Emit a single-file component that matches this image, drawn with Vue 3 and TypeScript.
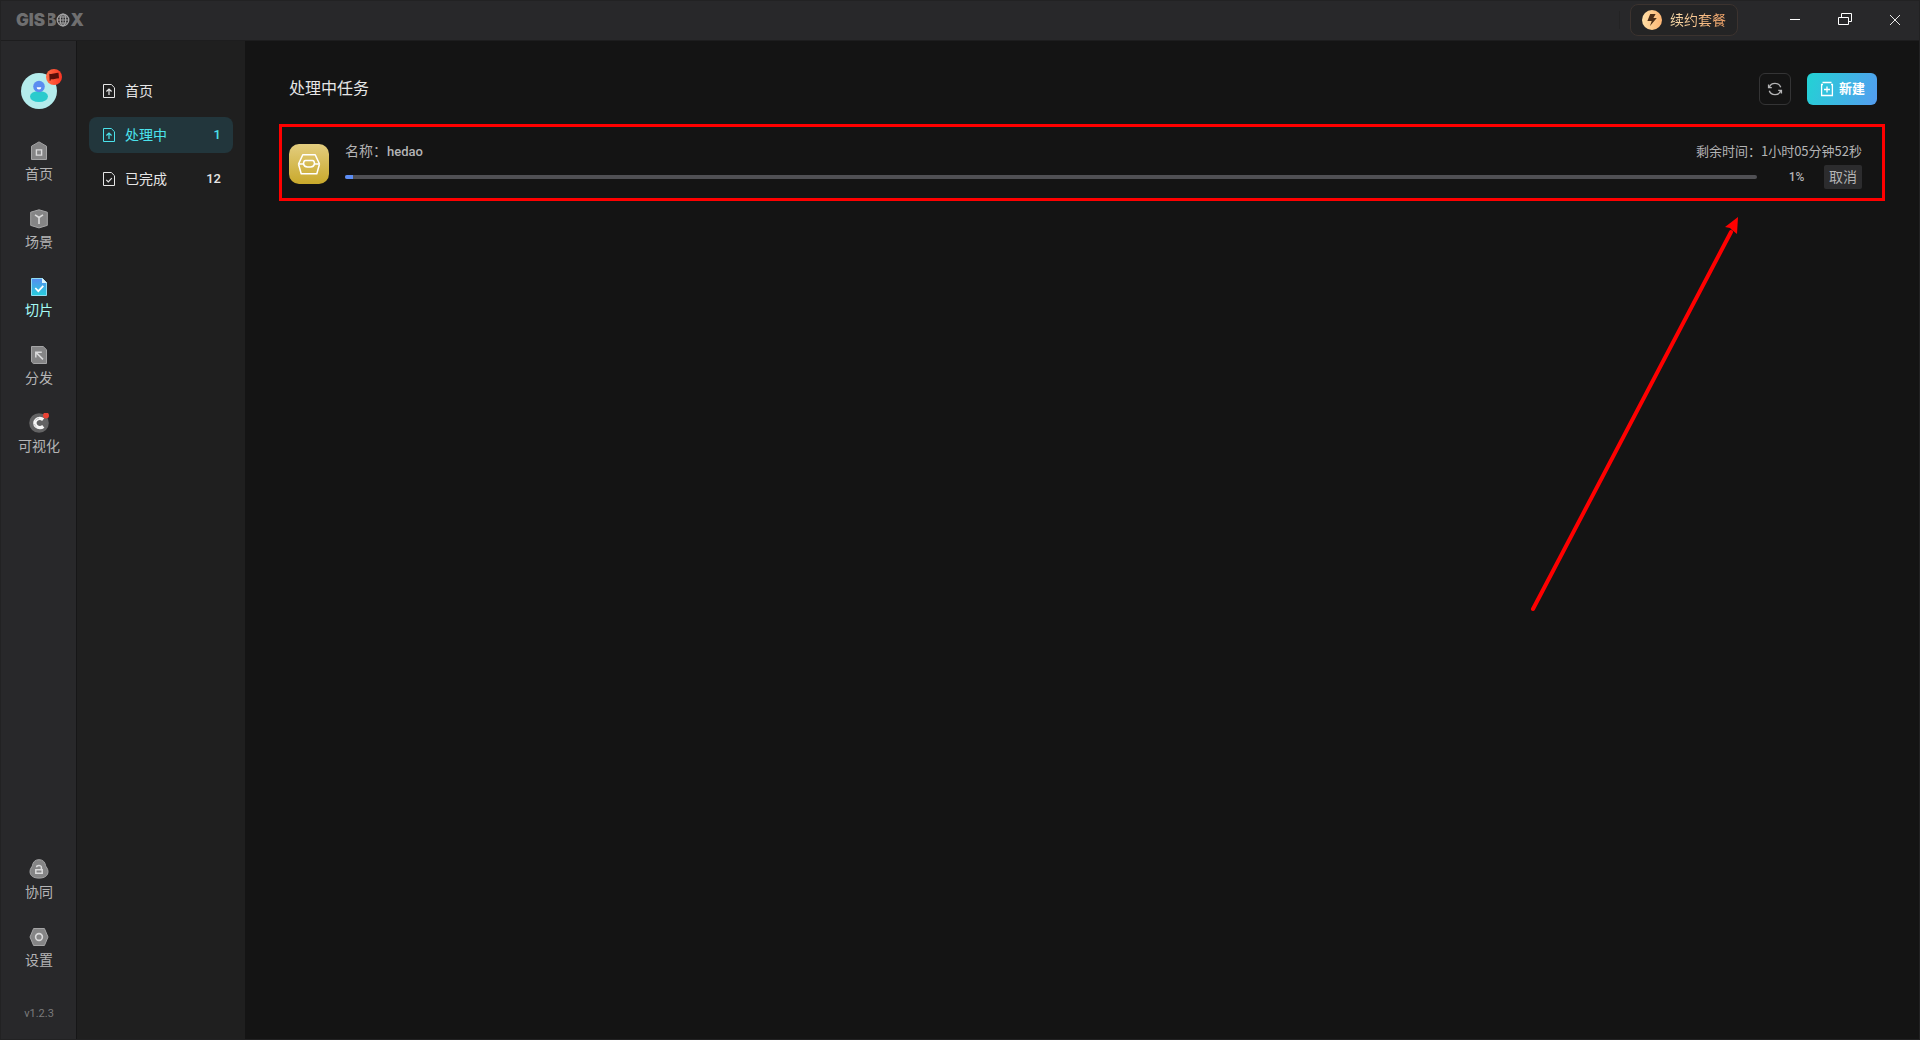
<script setup lang="ts">
import { ref } from 'vue'

interface RailItem {
  id: string
  label: string
}

interface MenuItem {
  id: string
  label: string
  count: number | null
}

interface Task {
  name: string
  remaining: string
  percent: number
}

const railTop: RailItem[] = [
  { id: 'home', label: '首页' },
  { id: 'scene', label: '场景' },
  { id: 'tile', label: '切片' },
  { id: 'publish', label: '分发' },
  { id: 'visual', label: '可视化' },
]

const railBottom: RailItem[] = [
  { id: 'team', label: '协同' },
  { id: 'settings', label: '设置' },
]

const menu: MenuItem[] = [
  { id: 'index', label: '首页', count: null },
  { id: 'running', label: '处理中', count: 1 },
  { id: 'done', label: '已完成', count: 12 },
]

const tasks: Task[] = [{ name: 'hedao', remaining: '1小时05分钟52秒', percent: 1 }]

const activeRail = ref('tile')
const activeMenu = ref('running')
</script>

<template>
  <div class="app">
    <header class="titlebar">
      <div class="logo" aria-label="GISBOX">
        <span>GIS</span><span class="logo-b">B</span>
        <svg class="globe" viewBox="0 0 14 14" width="14" height="14">
          <g fill="none" stroke="#a2a2a3" stroke-width="1.3">
            <circle cx="7" cy="7" r="5.8" />
            <ellipse cx="7" cy="7" rx="2.7" ry="5.8" />
            <path d="M7 1v12M1 7h12M2.2 4h9.6M2.2 10h9.6" stroke-width="1" />
          </g>
        </svg>
        <span>X</span>
      </div>
      <div class="title-actions">
        <span class="divider"></span>
        <button class="renew" type="button">
          <svg viewBox="0 0 20 20" width="20" height="20">
            <defs>
              <linearGradient id="coin" x1="0" y1="0" x2="1" y2="0">
                <stop offset="0" stop-color="#ffdfa6" />
                <stop offset="1" stop-color="#fdb573" />
              </linearGradient>
            </defs>
            <circle cx="10" cy="10" r="10" fill="url(#coin)" />
            <path d="M8.2 4h5.4l-2.2 4h3.4L8 16l1.7-5H5.4z" fill="#4b2d17" />
          </svg>
          <span class="renew-text">续约套餐</span>
        </button>
        <div class="window-buttons">
          <button type="button" aria-label="最小化">
            <svg viewBox="0 0 16 16" width="16" height="16"><path d="M3 7.500h10" stroke="#fff" fill="none" /></svg>
          </button>
          <button type="button" aria-label="还原">
            <svg viewBox="0 0 16 16" width="16" height="16">
              <path d="M1.500 5.500h10v7h-10zM4.500 5v-3.500h10v8h-3" stroke="#fff" fill="none" />
            </svg>
          </button>
          <button type="button" aria-label="关闭">
            <svg viewBox="0 0 16 16" width="16" height="16"><path d="M3 3l10 10M13 3L3 13" stroke="#e8e8e8" fill="none" /></svg>
          </button>
        </div>
      </div>
    </header>

    <div class="body">
      <nav class="rail">
        <button class="avatar" type="button" aria-label="账号">
          <svg viewBox="0 0 36 36" width="36" height="36">
            <circle cx="18" cy="18" r="18" fill="#b4ecec" />
            <ellipse cx="18" cy="23.500" rx="9" ry="5.500" fill="#2acbcd" />
            <circle cx="18" cy="13.500" r="5.800" fill="#5b8cf0" />
            <path d="M15.700 14.300h4.600a2.300 2.300 0 0 1-4.600 0z" fill="#fff" />
          </svg>
          <svg class="avatar-badge" viewBox="0 0 16 16" width="16" height="16">
            <defs>
              <linearGradient id="flag" x1="0" y1="0" x2="1" y2="0">
                <stop offset="0" stop-color="#ff6e45" />
                <stop offset="1" stop-color="#fb3524" />
              </linearGradient>
            </defs>
            <circle cx="8" cy="8" r="8" fill="url(#flag)" />
            <path d="M3.300 4.800q2 .5 4.600-.2t4.600-.9l.5 5.600q-2.200.2-4.500.7t-3.700.2l-.3 1.600h-.9z" fill="#5a0f0a" />
          </svg>
        </button>

        <div v-for="(group, g) in [railTop, railBottom]" :key="g" class="rail-group">
          <button
            v-for="item in group"
            :key="item.id"
            type="button"
            class="rail-item"
            :class="{ active: item.id === activeRail }"
            @click="activeRail = item.id"
          >
            <svg viewBox="0 0 20 20" width="20" height="20" fill="none">
              <template v-if="item.id === 'home'">
                <path d="M2.500 5.200L10 .900l7.500 4.300v13.300h-15z" fill="#858586" stroke="#a5a5a6" />
                <path d="M7.400 8.900h5.200v5.200H7.400z" stroke="#dadadb" stroke-width="1.400" />
              </template>
              <template v-else-if="item.id === 'scene'">
                <path d="M1.700 3.200L10 .800l8.300 2.400v13.200L10 18.900l-8.300-2.500z" fill="#858586" stroke="#a5a5a6" />
                <path d="M6 5.800l4 2.700 4-2.700M10 8.500v6.500" stroke="#dadadb" stroke-width="1.600" />
              </template>
              <template v-else-if="item.id === 'tile'">
                <defs>
                  <linearGradient id="tile" x1="0" y1="0" x2="0" y2="1">
                    <stop offset="0" stop-color="#568df0" />
                    <stop offset="1" stop-color="#27cddb" />
                  </linearGradient>
                </defs>
                <path d="M2.500 1.500h11l4 4v13h-15z" fill="url(#tile)" stroke="#8fdcf3" />
                <path d="M13 1l5 5h-5z" fill="#e0f6fd" />
                <path d="M6.300 11l3 3.200 5-5.400" stroke="#fff" stroke-width="1.700" />
              </template>
              <template v-else-if="item.id === 'publish'">
                <path d="M2.500 1.500h11.700l3.300 3.200v13.800H4.300l-1.800-1.700z" fill="#858586" stroke="#a5a5a6" />
                <path d="M6.800 12.500V7.200h6M7 7.400l7 7" stroke="#dadadb" stroke-width="1.500" />
              </template>
              <template v-else-if="item.id === 'visual'">
                <circle cx="10" cy="10" r="9.800" fill="#636364" />
                <path d="M14.200 6.600A5 4.600 0 1 0 14.300 13.400" stroke="#f6f6f6" stroke-width="3.400" />
                <path d="M6.500 7.500q1-2 3.500-2.300M5.500 11q.4 2 2 3" stroke="#c5c5c6" stroke-width="1" />
                <circle cx="17" cy="2.500" r="3" fill="#ea4335" />
              </template>
              <template v-else-if="item.id === 'team'">
                <path
                  d="M10 .700c4 0 6 2.500 6.500 5.600.5 2 2.500 3.200 2.500 6.200 0 4-3 6.600-9 6.600s-9-2.600-9-6.600c0-3 2-4.200 2.500-6.200C4 3.200 6 .700 10 .700z"
                  fill="#858586"
                  stroke="#a5a5a6"
                />
                <path d="M6.800 10.700h6.400v3.600H6.800zM7.600 8.200a2.400 1.700 0 0 1 4.800 0v2" stroke="#dadadb" stroke-width="1.500" />
              </template>
              <template v-else>
                <path d="M4.600 1.500h10.800L19 10l-3.600 8.500H4.600L1 10z" fill="#858586" stroke="#a5a5a6" />
                <circle cx="10" cy="10" r="3.400" stroke="#dadadb" stroke-width="1.600" />
              </template>
            </svg>
            <span>{{ item.label }}</span>
          </button>
        </div>
        <span class="version">v1.2.3</span>
      </nav>

      <aside class="menu">
        <button
          v-for="item in menu"
          :key="item.id"
          type="button"
          class="menu-item"
          :class="{ active: item.id === activeMenu }"
          @click="activeMenu = item.id"
        >
          <svg viewBox="0 0 12 14" width="12" height="14" fill="none" stroke="currentColor">
            <path d="M.5.500h7.800l3.200 3.200v9.800H.5z" />
            <path v-if="item.id === 'done'" d="M3.300 7.800l2 2 3.500-3.600" stroke-width="1.200" />
            <path v-else d="M6 11V5.500M3.400 7.500L6 5l2.600 2.500" stroke-width="1.200" />
          </svg>
          <span class="menu-label">{{ item.label }}</span>
          <span v-if="item.count !== null" class="menu-count">{{ item.count }}</span>
        </button>
      </aside>

      <main class="content">
        <div class="content-head">
          <h1>处理中任务</h1>
          <div class="head-actions">
            <button class="refresh" type="button" aria-label="刷新">
              <svg viewBox="0 0 16 16" width="16" height="16" fill="none" stroke="#b5b5b6" stroke-width="1.400">
                <path d="M2.300 6.200A6 5.600 0 0 1 13.700 6.200M13.700 9.800A6 5.600 0 0 1 2.300 9.800" />
                <path d="M1.600 3.600v3h3.200M14.400 12.400v-3h-3.200" />
              </svg>
            </button>
            <button class="create" type="button">
              <svg viewBox="0 0 14 16" width="14" height="16" fill="none" stroke="#fff">
                <path d="M3 3.500H1.600v11h10.800v-11H11" stroke-width="1.300" />
                <path d="M2.500 1.500h9M7 5.500v6M4 8.500h6" stroke-width="1.300" />
              </svg>
              <span>新建</span>
            </button>
          </div>
        </div>

        <section v-for="task in tasks" :key="task.name" class="task">
          <div class="task-icon">
            <svg viewBox="0 0 24 24" width="24" height="24" fill="none" stroke="#fff" stroke-width="1.500" stroke-linejoin="round">
              <path d="M1.500 12L5.800 2.700h12.400L22.500 12M1.500 12l2.700 9.800h15.600L22.500 12" />
              <path d="M1.500 12h5q.8 3 4 3h3q3.200 0 4-3h5" />
              <path d="M6.500 12q0-3.500 2-3.500h7q2 0 2 3.500" />
            </svg>
          </div>
          <div class="task-main">
            <div class="task-line">
              <span>名称：<span class="task-name">{{ task.name }}</span></span>
              <span class="task-time">剩余时间：{{ task.remaining }}</span>
            </div>
            <div class="task-line">
              <div class="bar" role="progressbar" aria-label="进度" :aria-valuenow="task.percent" aria-valuemin="0" aria-valuemax="100">
                <div class="bar-fill" :style="{ width: task.percent + '%' }"></div>
              </div>
              <span class="percent">{{ task.percent }}%</span>
              <button class="cancel" type="button">取消</button>
            </div>
          </div>
        </section>

        <svg class="pointer" viewBox="0 0 210 400" width="210" height="400">
          <path d="M4 394L202 17" stroke="#f00" stroke-width="4" stroke-linecap="round" />
          <path d="M209 2L208 19L203 15L201 13L196 12z" fill="#f00" stroke="none" />
        </svg>
      </main>
    </div>
  </div>
</template>

<style>
body {
  margin: 0;
  background: #141414;
}
</style>

<style scoped>
* {
  box-sizing: border-box;
}

button {
  padding: 0;
  border: 0;
  background: none;
  color: inherit;
  font: inherit;
  cursor: pointer;
}

svg {
  display: block;
  flex: none;
}

.app {
  display: flex;
  flex-direction: column;
  min-height: 100vh;
  color: #e6e6e6;
  background: #141414;
  font: 14px/20px Roboto, "Noto Sans CJK SC", sans-serif;
  outline: 1px solid #222223;
  outline-offset: -1px;
}

.titlebar {
  display: flex;
  align-items: center;
  justify-content: space-between;
  height: 41px;
  padding: 0 17px 0 16px;
  background: #28282a;
  border-bottom: 1px solid #1d1d1e;
}

.logo {
  display: flex;
  align-items: center;
  color: #6f6f70;
  font: 900 17px/20px Inter, sans-serif;
}

.logo-b {
  clip-path: inset(0 0 0 3px);
}

.title-actions {
  display: flex;
  align-items: center;
}

.divider {
  width: 1px;
  height: 18px;
  margin-right: 10px;
  background: #232324;
}

.renew {
  display: flex;
  align-items: center;
  gap: 8px;
  height: 32px;
  padding: 0 11px;
  border: 1px solid #3c332f;
  border-radius: 8px;
  background: #242425;
}

.renew-text {
  color: transparent;
  background: linear-gradient(90deg, #fbdfae, #f5a468);
  background-clip: text;
}

.window-buttons {
  display: flex;
  gap: 34px;
  margin-left: 49px;
}

.body {
  display: flex;
  flex: 1;
}

.rail {
  display: flex;
  flex-direction: column;
  align-items: center;
  width: 77px;
  padding: 32px 0 16px 2px;
  color: #b4b4b5;
  background: #28282a;
  border-right: 1px solid #161617;
}

.avatar {
  position: relative;
  margin-bottom: 32px;
}

.avatar-badge {
  position: absolute;
  top: -4px;
  right: -5px;
}

.rail-group {
  display: flex;
  flex-direction: column;
  gap: 25px;
}

.rail-group:nth-of-type(2) {
  margin-top: auto;
}

.rail-item {
  display: flex;
  flex-direction: column;
  align-items: center;
  gap: 3px;
}

.rail-item.active {
  color: #a5fbf5;
}

.version {
  margin-top: 34px;
  color: #7b7b7c;
  font-size: 11px;
}

.menu {
  display: flex;
  flex-direction: column;
  gap: 8px;
  width: 168px;
  padding: 32px 12px;
  background: #1f1f1f;
}

.menu-item {
  display: flex;
  align-items: center;
  gap: 10px;
  height: 36px;
  padding: 0 12px 0 14px;
  border-radius: 8px;
}

.menu-item.active {
  color: #4be3ec;
  background: #22363c;
}

.menu-label {
  flex: 1;
  text-align: left;
}

.menu-count {
  font-size: 13px;
  font-weight: 500;
}

.content {
  position: relative;
  flex: 1;
  padding: 32px 35px 32px 34px;
}

.content-head {
  display: flex;
  align-items: center;
  justify-content: space-between;
  margin-bottom: 19px;
  padding: 0 8px 0 10px;
}

h1 {
  margin: 0;
  font-size: 16px;
  font-weight: 400;
  line-height: 24px;
}

.head-actions {
  display: flex;
  gap: 16px;
}

.refresh {
  display: grid;
  place-items: center;
  width: 32px;
  height: 32px;
  border: 1px solid #343435;
  border-radius: 6px;
}

.create {
  display: flex;
  align-items: center;
  gap: 5px;
  height: 32px;
  padding: 0 12px 0 13px;
  border-radius: 6px;
  color: #fff;
  font-size: 13px;
  font-weight: 700;
  background: linear-gradient(110deg, #22d3d4, #549cf0);
}

.task {
  display: flex;
  align-items: center;
  gap: 16px;
  padding: 12px 20px 9px 7px;
  border: 3px solid #f00;
  color: #b3b3b4;
}

.task-icon {
  display: grid;
  place-items: center;
  width: 40px;
  height: 40px;
  border-radius: 10px;
  background: linear-gradient(180deg, #e3cd7f, #c9a92b);
}

.task-main {
  display: flex;
  flex: 1;
  flex-direction: column;
  gap: 2px;
}

.task-line {
  display: flex;
  align-items: center;
  justify-content: space-between;
  height: 24px;
}

.task-name {
  font-size: 13px;
  font-weight: 500;
}

.task-time {
  font-family: "Noto Sans CJK SC", sans-serif;
  font-size: 13px;
}

.bar {
  flex: 1;
  height: 4px;
  overflow: hidden;
  border-radius: 2px;
  background: #505054;
}

.bar-fill {
  height: 100%;
  min-width: 8px;
  max-width: 8px;
  background: #5c8df5;
}

.percent {
  width: 67px;
  padding-left: 12px;
  font-size: 12px;
  font-weight: 500;
  text-align: center;
}

.cancel {
  height: 24px;
  padding: 0 5px;
  border-radius: 2px;
  background: #2c2c2e;
}

.pointer {
  position: absolute;
  top: 174px;
  right: 181px;
  pointer-events: none;
}
</style>
